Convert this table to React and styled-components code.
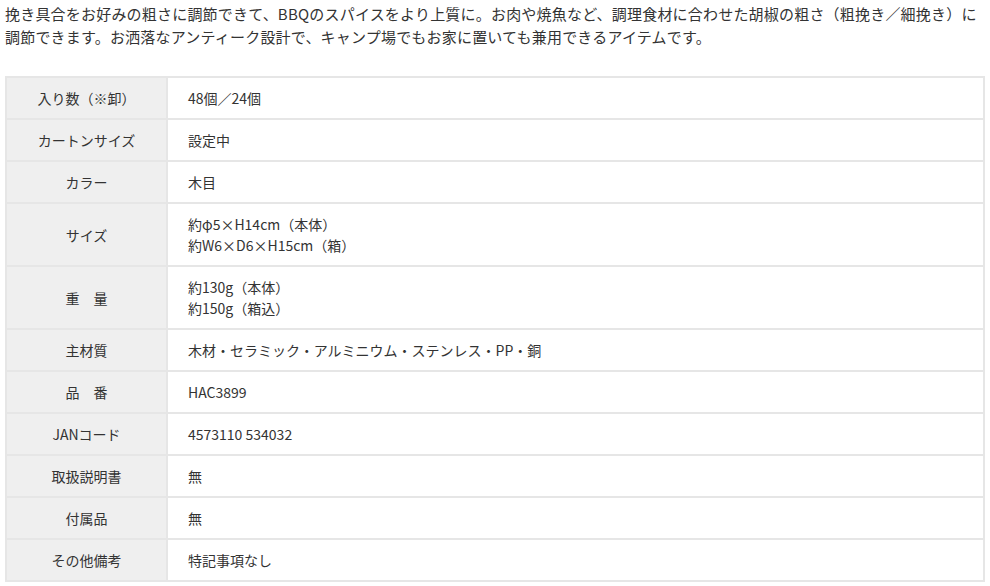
import React from "react";
import styled, { createGlobalStyle } from "styled-components";

const Global = createGlobalStyle`
  html, body { margin: 0; padding: 0; background: #fff; }
  body {
    font-family: "Noto Sans CJK JP", "Noto Sans", sans-serif;
    color: #333;
  }
`;

const Page = styled.div`
  padding: 2px 5px 0 5px;
`;

const Lead = styled.p`
  margin: 0 0 28px 0;
  font-size: 15px;
  line-height: 23px;
  letter-spacing: 0.2px;
  color: #333;
`;

const SpecTable = styled.table`
  width: 980px;
  table-layout: fixed;
  border-collapse: collapse;
  font-size: 14px;
  line-height: 21px;
  color: #333;
`;

const LabelCol = styled.col`
  width: 161px;
`;

const Head = styled.th`
  background: #efefef;
  border: 2px solid #e6e6e6;
  padding: 10px 4px 9px;
  font-weight: normal;
  text-align: center;
  vertical-align: middle;
`;

const Cell = styled.td`
  background: #fff;
  border: 2px solid #e6e6e6;
  padding: 10px 20px 9px;
  text-align: left;
  vertical-align: middle;
`;

const rows = [
  ["入り数（※卸）", ["48個／24個"]],
  ["カートンサイズ", ["設定中"]],
  ["カラー", ["木目"]],
  ["サイズ", ["約φ5×H14cm（本体）", "約W6×D6×H15cm（箱）"]],
  ["重　量", ["約130g（本体）", "約150g（箱込）"]],
  ["主材質", ["木材・セラミック・アルミニウム・ステンレス・PP・銅"]],
  ["品　番", ["HAC3899"]],
  ["JANコード", ["4573110 534032"]],
  ["取扱説明書", ["無"]],
  ["付属品", ["無"]],
  ["その他備考", ["特記事項なし"]],
];

export default function App() {
  return (
    <Page>
      <Global />
      <Lead>
        挽き具合をお好みの粗さに調節できて、BBQのスパイスをより上質に。お肉や焼魚など、調理食材に合わせた胡椒の粗さ（粗挽き／細挽き）に調節できます。お洒落なアンティーク設計で、キャンプ場でもお家に置いても兼用できるアイテムです。
      </Lead>
      <SpecTable>
        <colgroup>
          <LabelCol />
          <col />
        </colgroup>
        <tbody>
          {rows.map(([label, values]) => (
            <tr key={label}>
              <Head>{label}</Head>
              <Cell>
                {values.map((v, i) => (
                  <React.Fragment key={i}>
                    {i > 0 && <br />}
                    {v}
                  </React.Fragment>
                ))}
              </Cell>
            </tr>
          ))}
        </tbody>
      </SpecTable>
    </Page>
  );
}
